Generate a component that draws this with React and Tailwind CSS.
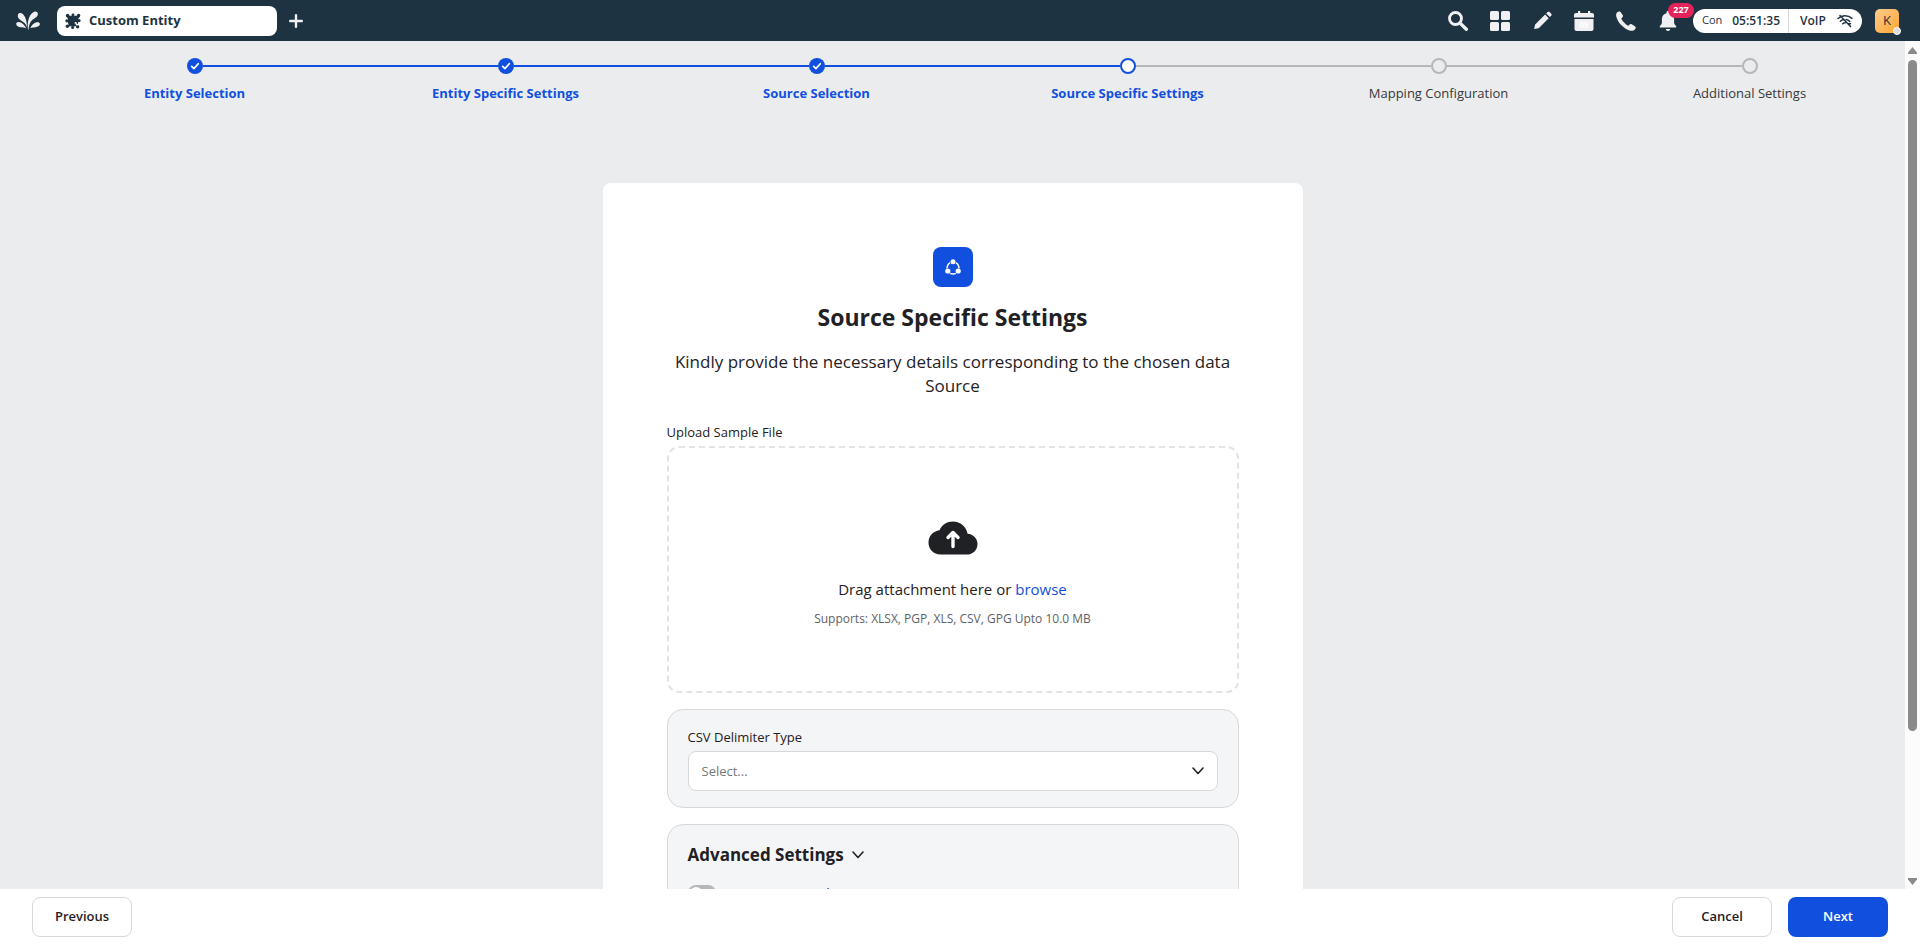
import React, { useState } from "react";

const steps = [
  { label: "Entity Selection", state: "done" },
  { label: "Entity Specific Settings", state: "done" },
  { label: "Source Selection", state: "done" },
  { label: "Source Specific Settings", state: "current" },
  { label: "Mapping Configuration", state: "todo" },
  { label: "Additional Settings", state: "todo" },
];

function Logo() {
  return (
    <svg width="24" height="20" viewBox="0 0 24 20" fill="#f0f0f2">
      <path d="M12.1 19.6C11 13 12.3 3 18.2.7c2.200-.8 4.200.6 3.600 3-.9 3.800-6.200 3.600-8.200 9.300-.6 1.800-.8 4-1.500 6.600z" />
      <path d="M11 16.200C9.800 12.600 7.800 11.300 5 9.600 2.800 8.200 1.200 6 1.900 3.800c.6-2 3.200-2.200 4.900-.7 3 2.700 4.100 8.200 4.200 13.100z" />
      <path d="M10.200 17.200c-2.200-.9-3.400-.6-5.400-.9C2.300 16 .3 14.800.2 13c0-1.600 1.700-2.300 3.700-1.800 2.700.7 4.800 3.300 6.300 6z" />
      <path d="M14.200 17.200c1.500-2.900 3.700-5.300 6.400-5.900 1.800-.4 3.500.4 3.300 2-.3 1.900-2.100 2.600-4.500 2.900-2 .3-3.200.2-5.200 1z" />
    </svg>
  );
}

function PuzzleIcon() {
  return (
    <svg width="16" height="16" viewBox="0 0 16 16" fill="#1d3342">
      <circle cx="8" cy="8" r="5.400" />
      <path d="M3.800 2.800h8.800v10.400H3.400z" />
      <circle cx="2.600" cy="2.400" r="1.700" />
      <circle cx="13.600" cy="2.400" r="1.700" />
      <circle cx="2.400" cy="13.200" r="1.700" />
      <circle cx="12.600" cy="13.800" r="1.700" />
      <circle cx="1.900" cy="7.800" r="1.600" />
      <circle cx="8" cy="1.800" r="1.400" />
      <circle cx="14" cy="7.600" r="1.600" />
      <circle cx="7.600" cy="14.400" r="1.500" />
      <path d="m2.400 1.200 4 4-2.600 1.600L1.200 3.400zM13.600 1.200l-4 4L12.400 7l2.600-3.600z" />
      <path d="M9.600 9.400c.9-.8 2-.4 2.200.6.1.6 0 1.100.6 1.100.9 0 1.400-.6 2.900-.5v1.200c-1.700 0-2.300.9-3.600.7-.9-.2-1-1-1.100-1.600-.1-.6-.7-.5-1-.2z" fill="#fff" />
    </svg>
  );
}

function SearchIcon() {
  return (
    <svg width="20" height="20" viewBox="0 0 20 20" fill="none" stroke="#f0f0f2">
      <circle cx="7.500" cy="7.500" r="6" strokeWidth="2.800" />
      <path d="m12.600 12.600 5.700 5.700" strokeWidth="3.400" strokeLinecap="round" />
    </svg>
  );
}

function GridIcon() {
  return (
    <svg width="20" height="20" viewBox="0 0 20 20" fill="#f0f0f2">
      <rect width="9" height="9" rx="1.500" />
      <rect x="11" width="9" height="9" rx="1.500" />
      <rect y="11" width="9" height="9" rx="1.500" />
      <rect x="11" y="11" width="9" height="9" rx="1.500" />
    </svg>
  );
}

function PencilIcon() {
  return (
    <svg width="20" height="20" viewBox="0 0 20 20" fill="#f0f0f2">
      <path d="M2.600 18.100c-.3 0-.5-.3-.4-.6l.8-3.500c.1-.3.2-.5.400-.7L13.100 3.600l3.600 3.600-9.700 9.700c-.2.200-.4.300-.7.400z" />
      <path d="m14.200 2.500 1.400-1.400c.6-.6 1.400-.6 2 0L19.200 2.700c.6.600.6 1.400 0 2l-1.400 1.400z" />
    </svg>
  );
}

function CalendarIcon() {
  return (
    <svg width="20" height="20" viewBox="0 0 20 20" fill="#f0f0f2">
      <path d="M4 0h2.200v2H14V0h2.200v2H18a2 2 0 0 1 2 2v2.500H0V4a2 2 0 0 1 2-2h2z" />
      <path d="M.5 8h19v10a2 2 0 0 1-2 2h-15a2 2 0 0 1-2-2z" />
      <text x="10" y="17" fontSize="8" fontWeight="700" fill="#fff" textAnchor="middle" fontFamily="Open Sans">09</text>
    </svg>
  );
}

function PhoneIcon() {
  return (
    <svg width="20" height="20" viewBox="0 0 20 20" fill="#f0f0f2">
      <path d="M1.200 1.300C2.300.4 3.700 0 4.500.9l2.200 3.200c.5.800.4 1.600-.2 2.200L5.300 7.500c.9 2.500 4.300 6 7 7.200l1.300-1.200c.6-.6 1.500-.7 2.200-.2l3.300 2.200c1 .8.800 1.900-.2 3-1 1.100-2.700 1.600-4.400 1.200C8 18.300 1.500 11.500.2 5.300c-.3-1.600 0-3.100 1-4z" />
    </svg>
  );
}

function BellIcon() {
  return (
    <svg width="20" height="20" viewBox="0 0 20 20" fill="#f0f0f2">
      <path d="M10 0c.9 0 1.500.6 1.500 1.400v.8c2.800.7 4.600 2.900 4.600 5.900v3.600c0 1.200.7 2 1.800 3 .8.800.4 1.900-.7 1.900H2.800c-1.100 0-1.500-1.100-.7-1.900 1.100-1 1.800-1.800 1.800-3V8.100c0-3 1.800-5.200 4.600-5.900v-.8C8.500.6 9.100 0 10 0z" />
      <path d="M7.800 18h4.400c0 1.200-1 2-2.200 2s-2.200-.8-2.200-2z" />
    </svg>
  );
}

function NoSignalIcon() {
  return (
    <svg width="16" height="14" viewBox="0 0 16 14" fill="none" stroke="#1d3342" strokeWidth="1.500" strokeLinecap="round">
      <path d="M1 4.500C4.800 1 10.500.7 15 4.300M3.300 7.300c1-.9 2-1.400 3.200-1.700M9.200 5.600c1.400.3 2.500.9 3.500 1.800M5.700 9.800c.8-.7 1.600-1 2.600-1M3 1.500l10.500 11M10.500 9.500l3 .2" />
    </svg>
  );
}

function NodesIcon() {
  return (
    <svg width="16" height="16" viewBox="0 0 16 16">
      <circle cx="8" cy="9" r="6" fill="none" stroke="#fff" strokeWidth="1.600" />
      <circle cx="8" cy="2.700" r="3.100" fill="#1150df" />
      <circle cx="3" cy="12" r="3.100" fill="#1150df" />
      <circle cx="13" cy="12" r="3.100" fill="#1150df" />
      <circle cx="8" cy="2.700" r="2.500" fill="#fff" />
      <circle cx="2.800" cy="12" r="2.600" fill="#fff" />
      <circle cx="13.200" cy="12" r="2.600" fill="#fff" />
    </svg>
  );
}

function CloudIcon() {
  return (
    <svg width="50" height="34" viewBox="0 0 50 34">
      <path d="M12.500 33.500C5.500 33.500.5 28.300.5 21.500c0-6.400 4.500-11.400 11-12.300C14 3.800 19 .5 25 .5c7.400 0 13.200 5 14.600 12.200 5.600.3 9.900 4.700 9.900 10.200 0 5.900-4.600 10.600-10.500 10.600z" fill="#1f2124" />
      <path d="M25 25.500V12M20 16.500l5-5 5 5" fill="none" stroke="#fff" strokeWidth="3.400" strokeLinecap="round" strokeLinejoin="round" />
    </svg>
  );
}

function Chevron() {
  return (
    <svg width="12" height="8" viewBox="0 0 12 8" fill="none" stroke="#1f2124" strokeWidth="1.600" strokeLinecap="round" strokeLinejoin="round">
      <path d="m1 1 5 5.500L11 1" />
    </svg>
  );
}

function Header() {
  return (
    <header className="flex h-[41px] shrink-0 items-center bg-[#1d3342] pr-[21px] pl-4">
      <a href="#home" aria-label="Home"><Logo /></a>
      <button className="ml-[17px] flex h-[30px] w-[220px] items-center gap-2 rounded-lg bg-white px-2 text-[13px] font-bold text-[#1d3342]">
        <PuzzleIcon />
        Custom Entity
      </button>
      <button aria-label="New tab" className="ml-3">
        <svg width="14" height="14" viewBox="0 0 14 14" stroke="#f0f0f2" strokeWidth="2.400" strokeLinecap="round">
          <path d="M7 1.200v11.600M1.200 7h11.600" />
        </svg>
      </button>
      <nav className="ml-auto flex items-center gap-[22px]">
        <button aria-label="Search"><SearchIcon /></button>
        <button aria-label="Apps"><GridIcon /></button>
        <button aria-label="Compose"><PencilIcon /></button>
        <button aria-label="Calendar"><CalendarIcon /></button>
        <button aria-label="Calls"><PhoneIcon /></button>
        <button aria-label="Notifications" className="relative">
          <BellIcon />
          <span className="absolute -top-2 left-[10px] flex h-[15px] w-[26px] items-center justify-center rounded-full bg-[#e5235b] text-[9px] leading-3 font-bold text-white">
            227
          </span>
        </button>
      </nav>
      <div className="ml-[15px] flex h-6 items-center rounded-full bg-white text-xs text-[#1d3342]">
        <span className="flex h-full w-[96px] items-center justify-between border-r border-[#d4d6d8] pr-2 pl-[9px]">
          <span className="text-[11px]">Con</span>
          <span className="font-semibold">05:51:35</span>
        </span>
        <span className="flex w-[73px] items-center justify-between pr-[9px] pl-[11px] font-semibold">
          VoIP
          <NoSignalIcon />
        </span>
      </div>
      <button className="relative ml-[13px] size-6 rounded-[5px] bg-linear-to-br from-[#ffcb8a] to-[#ffa51f] text-[13px] text-[#1d3342]">
        K
        <span className="absolute -right-[2px] -bottom-[2px] size-2 rounded-full border border-white bg-[#d9dbde]" />
      </button>
    </header>
  );
}

function Dot({ state }) {
  if (state === "done") {
    return (
      <svg width="16" height="16" viewBox="0 0 16 16" className="shrink-0">
        <circle cx="8" cy="8" r="8" fill="#1150df" />
        <path d="m4.700 8.400 2.200 2.200 4.400-4.900" fill="none" stroke="#fff" strokeWidth="1.700" strokeLinecap="round" strokeLinejoin="round" />
      </svg>
    );
  }
  if (state === "current") return <span className="size-4 shrink-0 rounded-full border-2 border-[#1150df] bg-white" />;
  return <span className="size-4 shrink-0 rounded-full border-2 border-[#b5b7ba]" />;
}

function Stepper() {
  return (
    <ol className="grid grid-cols-6 pt-[17px] pl-[39px]">
      {steps.map((s, i) => {
        const blue = "h-[2px] flex-1 bg-[#1150df]";
        const gray = "h-[2px] flex-1 bg-[#b5b7ba]";
        const before = i === 0 ? "h-[2px] flex-1" : s.state === "todo" ? gray : blue;
        const after = i === steps.length - 1 ? "h-[2px] flex-1" : s.state === "done" ? blue : gray;
        return (
          <li key={s.label} className="flex flex-col items-center gap-[10px]">
            <div className="flex w-full items-center">
              <span className={before} />
              <Dot state={s.state} />
              <span className={after} />
            </div>
            <span className={s.state === "todo" ? "text-[13px] leading-[18px] text-[#36383b]" : "text-[13px] leading-[18px] font-bold text-[#1150df]"}>
              {s.label}
            </span>
          </li>
        );
      })}
    </ol>
  );
}

function SettingsCard() {
  const [on, setOn] = useState(false);
  return (
    <section className="mx-auto mt-[81px] flex w-full max-w-[700px] flex-col rounded-lg bg-white p-16">
      <div className="flex size-10 items-center justify-center self-center rounded-lg bg-[#1150df]">
        <NodesIcon />
      </div>
      <h1 className="mt-4 text-center text-[23px] leading-7 font-bold">Source Specific Settings</h1>
      <p className="mt-[19px] text-center text-[17px] leading-6">
        Kindly provide the necessary details corresponding to the chosen data Source
      </p>
      <label htmlFor="sample" className="mt-6 text-[13px] leading-5">Upload Sample File</label>
      <div className="mt-1 flex h-[247px] flex-col items-center rounded-xl border-2 border-dashed border-[#e2e3e4] pt-[73px]">
        <CloudIcon />
        <p className="mt-6 text-[15px] leading-5">
          Drag attachment here or{" "}
          <label htmlFor="sample" className="cursor-pointer text-[#1150df]">browse</label>
        </p>
        <p className="mt-[11px] text-xs leading-[18px] text-[#5f6265]">Supports: XLSX, PGP, XLS, CSV, GPG Upto 10.0 MB</p>
        <input id="sample" type="file" className="sr-only" />
      </div>
      <div className="mt-4 flex flex-col rounded-2xl border border-[#d6d8da] bg-[#f4f5f7] px-5 pt-[17px] pb-4">
        <label htmlFor="delimiter" className="text-[13px] leading-5">CSV Delimiter Type</label>
        <div className="mt-1 grid items-center">
          <select id="delimiter" defaultValue="" className="col-start-1 row-start-1 h-10 w-full appearance-none rounded-lg border border-[#d6d8da] bg-white px-[13px] pt-[2px] text-[13px] text-[#75787b]">
            <option value="">Select...</option>
          </select>
          <span className="pointer-events-none col-start-1 row-start-1 mr-[14px] justify-self-end"><Chevron /></span>
        </div>
      </div>
      <div className="mt-4 rounded-2xl border border-[#d6d8da] bg-[#f4f5f7] px-5 pt-[18px] pb-5">
        <button className="flex items-center gap-2 text-[17px] leading-6 font-bold">
          Advanced Settings
          <Chevron />
        </button>
        <label className="mt-[18px] flex items-center gap-2 text-[13px] leading-4">
          <input type="checkbox" role="switch" checked={on} onChange={() => setOn(!on)} className="peer sr-only" />
          <span className="flex h-4 w-7 items-center rounded-full bg-[#b5b7ba] p-[2px] peer-checked:justify-end peer-checked:bg-[#1150df]">
            <span className="size-3 rounded-full bg-white" />
          </span>
          Source Encrypted
        </label>
      </div>
    </section>
  );
}

function Footer() {
  const outline = "h-10 w-[100px] rounded-lg border border-[#d6d8da] bg-white";
  return (
    <footer className="flex h-14 shrink-0 items-center gap-4 bg-white px-8 text-[13px] font-semibold">
      <button className={outline}>Previous</button>
      <button className={"ml-auto " + outline}>Cancel</button>
      <button className="h-10 w-[100px] rounded-lg bg-[#1150df] text-white">Next</button>
    </footer>
  );
}

export default function App() {
  return (
    <div className="flex h-screen flex-col bg-[#ebecee] font-['Open_Sans',sans-serif] text-[#1f2124]">
      <Header />
      <div className="flex min-h-0 flex-1">
        <main className="flex-1 overflow-y-auto [scrollbar-width:none]">
          <Stepper />
          <SettingsCard />
        </main>
        <div aria-hidden="true" className="flex w-[15px] flex-col items-center bg-[#fcfcfc] pt-[6px] pb-1">
          <svg width="9" height="7" viewBox="0 0 9 7" fill="#8a8a8a"><path d="M4.500 0 9 5.500V7H0V5.500z" /></svg>
          <div className="mt-[6px] flex min-h-0 w-full flex-1 flex-col items-center">
            <div className="h-[82%] w-[9px] rounded-full bg-[#8a8a8a]" />
          </div>
          <svg width="9" height="7" viewBox="0 0 9 7" fill="#8a8a8a"><path d="M4.500 7 9 1.500V0H0v1.500z" /></svg>
        </div>
      </div>
      <Footer />
    </div>
  );
}
